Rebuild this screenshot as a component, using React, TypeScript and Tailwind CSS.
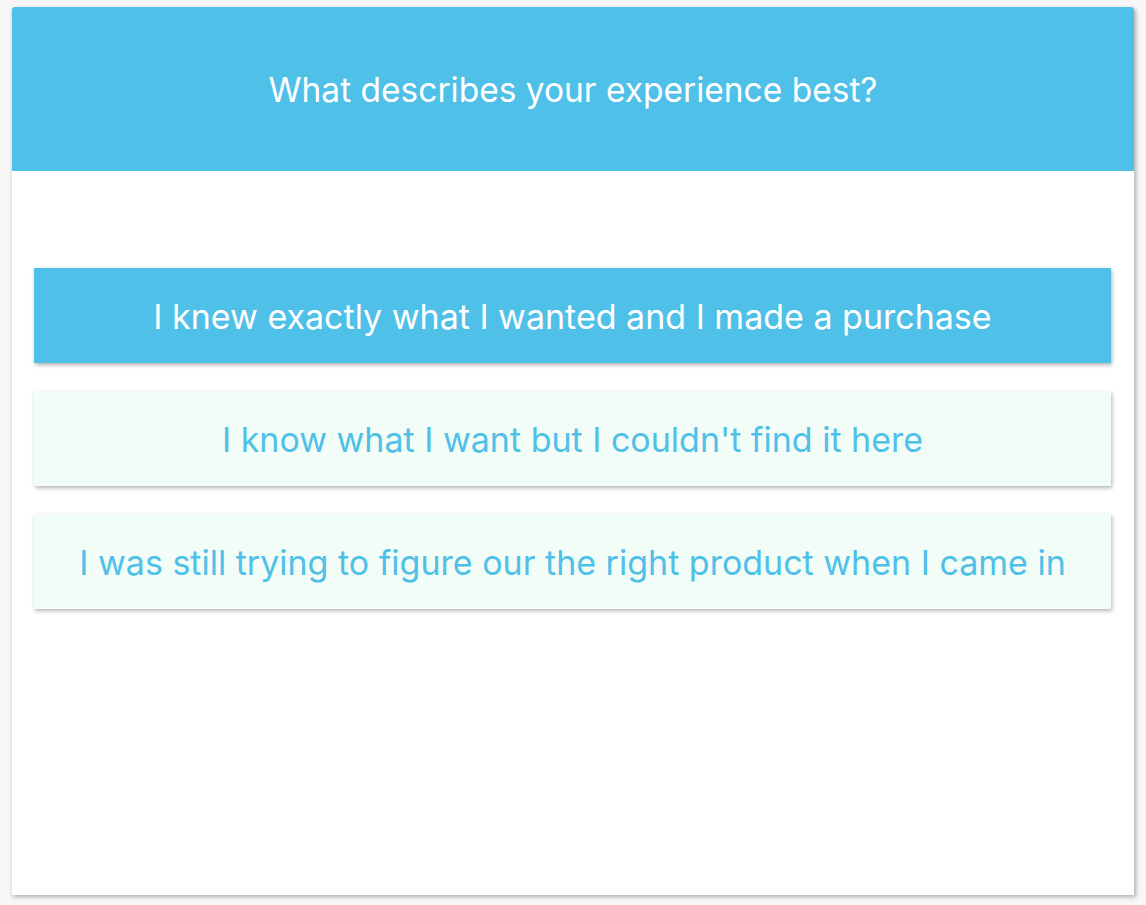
import React from 'react';

const options = [
	'I knew exactly what I wanted and I made a purchase',
	"I know what I want but I couldn't find it here",
	'I was still trying to figure our the right product when I came in',
];

const App = () => {
	const selected = 0;
	return (
		<div className="min-h-[905px] w-[1146px] bg-[#f7f7f7] pt-[7px] pl-[11px] font-['Inter',sans-serif]">
			<div className="w-[1123px] h-[888px] bg-white rounded-t-[3px] shadow-[2px_2px_4px_rgba(0,0,0,0.3)] border-l border-[#e4e4e4] flex flex-col">
				<div className="h-[164px] bg-[#4fc0e8] rounded-t-[3px] flex items-center justify-center pt-[2px]">
					<span className="text-white text-[33.5px]">
						What describes your experience best?
					</span>
				</div>
				<div className="flex flex-col gap-[28px] pt-[97px] pl-[22px] pr-[23px]">
					{options.map((text, i) => (
						<div
							key={i}
							className={
								i === selected
									? 'h-[95px] flex items-center justify-center pt-[2px] bg-[#4fc0e8] text-white text-[34px] shadow-[1px_2px_4px_rgba(0,0,0,0.3)]'
									: 'h-[95px] flex items-center justify-center pt-[2px] bg-[#f3fdf8] text-[#4fc0e8] text-[34px] shadow-[1px_2px_4px_rgba(0,0,0,0.3)]'
							}
						>
							{text}
						</div>
					))}
				</div>
			</div>
		</div>
	);
};

export default App;
